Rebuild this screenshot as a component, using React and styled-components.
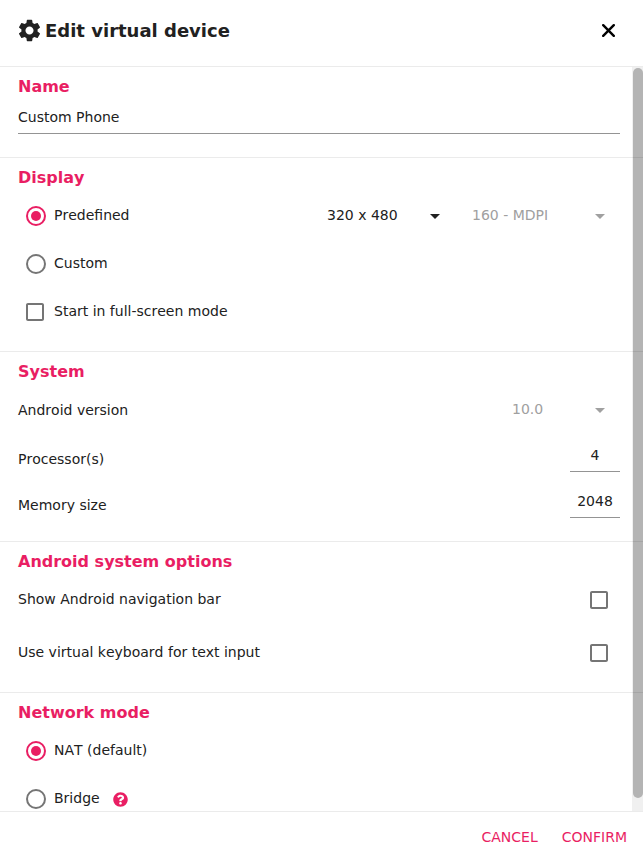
import React from "react";
import styled, { createGlobalStyle } from "styled-components";
import { FaQuestionCircle } from "react-icons/fa";
import { MdSettings } from "react-icons/md";

const GlobalStyle = createGlobalStyle`
  *, *::before, *::after { box-sizing: border-box; }
  html, body { margin: 0; padding: 0; overflow: hidden; }
  body {
    font-family: "DejaVu Sans", sans-serif;
    font-size: 14px;
    line-height: 20px;
    font-kerning: none;
    color: #212121;
    background: #fff;
  }
  button, input { font: inherit; font-kerning: none; color: inherit; }
`;

const Dialog = styled.main`
  display: flex;
  flex-direction: column;
  width: 643px;
  height: 860px;
`;

const Header = styled.header`
  display: flex;
  align-items: center;
  flex: none;
  height: 67px;
  padding: 0 28px 5px 15.5px;
  border-bottom: 1px solid #ebebeb;
`;

const GearIcon = styled(MdSettings)`
  width: 27px;
  height: 27px;
  margin-right: 2.5px;
`;

const Title = styled.h1`
  flex: 1;
  margin: 0;
  font-size: 18px;
  line-height: 24px;
  font-weight: bold;
`;

const CloseButton = styled.button`
  display: flex;
  padding: 0;
  border: 0;
  background: none;
  color: #000;
`;

const Body = styled.div`
  position: relative;
  flex: 1;
  min-height: 0;
  overflow: hidden;
`;

const Section = styled.section`
  height: ${(p) => p.$height}px;
  padding: 10px 23px 0 18px;
  border-bottom: 1px solid #ebebeb;
`;

const Heading = styled.h2`
  margin: 0;
  font-size: 16px;
  line-height: 20px;
  font-weight: bold;
  color: #e91e63;
`;

const NameInput = styled.input`
  display: block;
  width: 100%;
  height: 34px;
  margin-top: 3px;
  padding: 0;
  border: 0;
  border-bottom: 1px solid #949494;
  outline: 0;
  background: none;
`;

const Row = styled.div`
  display: flex;
  align-items: center;
  height: ${(p) => p.$height || 48}px;
`;

const Options = styled.div`
  padding: 4px 0 0 6px;
`;

const OptionRow = styled(Row)`
  gap: 6px;
`;

const RowLabel = styled.span`
  flex: 1;
  white-space: nowrap;
  padding-top: ${(p) => p.$drop || 0}px;
`;

const OptionLabel = styled.span`
  flex: ${(p) => (p.$fill ? 1 : "none")};
  padding-bottom: 2px;
  white-space: nowrap;
`;

const ToggleIcon = styled.svg`
  flex: none;
  width: 24px;
  height: 24px;
  margin-left: ${(p) => p.$shift || 0}px;
  margin-right: ${(p) => p.$end || 0}px;
  color: ${(p) => (p.$checked ? "#e91e63" : "#757575")};
`;

const Select = styled.div`
  display: flex;
  align-items: center;
  justify-content: space-between;
  width: ${(p) => p.$width}px;
  margin-right: ${(p) => p.$gap}px;
  color: ${(p) => (p.$disabled ? "#a0a0a0" : "#212121")};
`;

const NumberInput = styled.input`
  width: 50px;
  height: 34px;
  margin-bottom: 4px;
  padding: 0;
  border: 0;
  border-bottom: 1px solid #949494;
  outline: 0;
  background: none;
  text-align: center;
`;

const SettingList = styled.div`
  display: flex;
  flex-direction: column;
  gap: ${(p) => p.$gap || 0}px;
  padding-top: ${(p) => p.$top}px;
`;

const HelpIcon = styled(FaQuestionCircle)`
  width: 15px;
  height: 15px;
  margin-top: 1px;
  margin-left: 7px;
  color: #e91e63;
`;

const ScrollTrack = styled.div`
  position: absolute;
  top: 0;
  right: 0;
  bottom: 0;
  width: 11px;
  padding: 1px 0 0 1px;
  background: rgba(0, 0, 0, 0.06);
`;

const ScrollThumb = styled.div`
  width: 10px;
  height: 730px;
  border-radius: 5px;
  background: rgba(0, 0, 0, 0.25);
`;

const Footer = styled.footer`
  display: flex;
  align-items: center;
  justify-content: flex-end;
  flex: none;
  gap: 24px;
  height: 49px;
  padding: 2px 16px 0 0;
  border-top: 1px solid #ebebeb;
`;

const ActionButton = styled.button`
  padding: 0;
  border: 0;
  background: none;
  color: #e91e63;
`;

function Radio({ checked }) {
  return (
    <ToggleIcon viewBox="0 0 24 24" $checked={checked}>
      <circle cx="12" cy="12" r="9" fill="none" stroke="currentColor" strokeWidth="2" />
      {checked && <circle cx="12" cy="12" r="5" fill="currentColor" />}
    </ToggleIcon>
  );
}

function Checkbox({ shift, end }) {
  return (
    <ToggleIcon viewBox="0 0 24 24" $shift={shift} $end={end}>
      <path
        fill="currentColor"
        d="M19 5v14H5V5h14m0-2H5c-1.1 0-2 .9-2 2v14c0 1.1.9 2 2 2h14c1.1 0 2-.9 2-2V5c0-1.1-.9-2-2-2z"
      />
    </ToggleIcon>
  );
}

function Dropdown({ value, width, gap = 0, disabled }) {
  return (
    <Select $width={width} $gap={gap} $disabled={disabled}>
      <OptionLabel>{value}</OptionLabel>
      <svg width="24" height="24" viewBox="0 0 24 24">
        <path fill="currentColor" d="M7 10l5 5 5-5z" />
      </svg>
    </Select>
  );
}

export default function App() {
  return (
    <Dialog>
      <GlobalStyle />
      <Header>
        <GearIcon />
        <Title>Edit virtual device</Title>
        <CloseButton aria-label="Close">
          <svg width="13" height="13" viewBox="0 0 13 13">
            <path d="M1.2 1.2L11.8 11.8M11.8 1.2L1.2 11.8" stroke="currentColor" strokeWidth="2.4" strokeLinecap="round" />
          </svg>
        </CloseButton>
      </Header>
      <Body>
        <Section $height={91}>
          <Heading>Name</Heading>
          <NameInput defaultValue="Custom Phone" aria-label="Name" />
        </Section>
        <Section $height={194}>
          <Heading>Display</Heading>
          <Options>
            <OptionRow>
              <Radio checked />
              <OptionLabel $fill>Predefined</OptionLabel>
              <Dropdown value="320 x 480" width={120} gap={19} />
              <Dropdown value="160 - MDPI" width={140} gap={8} disabled />
            </OptionRow>
            <OptionRow>
              <Radio />
              <OptionLabel>Custom</OptionLabel>
            </OptionRow>
            <OptionRow>
              <Checkbox shift={-1} end={1} />
              <OptionLabel>Start in full-screen mode</OptionLabel>
            </OptionRow>
          </Options>
        </Section>
        <Section $height={190}>
          <Heading>System</Heading>
          <SettingList $top={4}>
            <Row>
              <RowLabel>Android version</RowLabel>
              <Dropdown value="10.0" width={100} gap={8} disabled />
            </Row>
            <Row $height={46}>
              <RowLabel $drop={4}>Processor(s)</RowLabel>
              <NumberInput defaultValue="4" aria-label="Processors" />
            </Row>
            <Row $height={46}>
              <RowLabel $drop={4}>Memory size</RowLabel>
              <NumberInput defaultValue="2048" aria-label="Memory size" />
            </Row>
          </SettingList>
        </Section>
        <Section $height={151}>
          <Heading>Android system options</Heading>
          <SettingList $top={2} $gap={1}>
            <Row $height={52}>
              <OptionLabel $fill>Show Android navigation bar</OptionLabel>
              <Checkbox end={9} />
            </Row>
            <Row $height={52}>
              <OptionLabel $fill>Use virtual keyboard for text input</OptionLabel>
              <Checkbox end={9} />
            </Row>
          </SettingList>
        </Section>
        <Section $height={160}>
          <Heading>Network mode</Heading>
          <Options>
            <OptionRow>
              <Radio checked />
              <OptionLabel>NAT (default)</OptionLabel>
            </OptionRow>
            <OptionRow>
              <Radio />
              <OptionLabel>Bridge</OptionLabel>
              <HelpIcon />
            </OptionRow>
          </Options>
        </Section>
        <ScrollTrack>
          <ScrollThumb />
        </ScrollTrack>
      </Body>
      <Footer>
        <ActionButton>CANCEL</ActionButton>
        <ActionButton>CONFIRM</ActionButton>
      </Footer>
    </Dialog>
  );
}
